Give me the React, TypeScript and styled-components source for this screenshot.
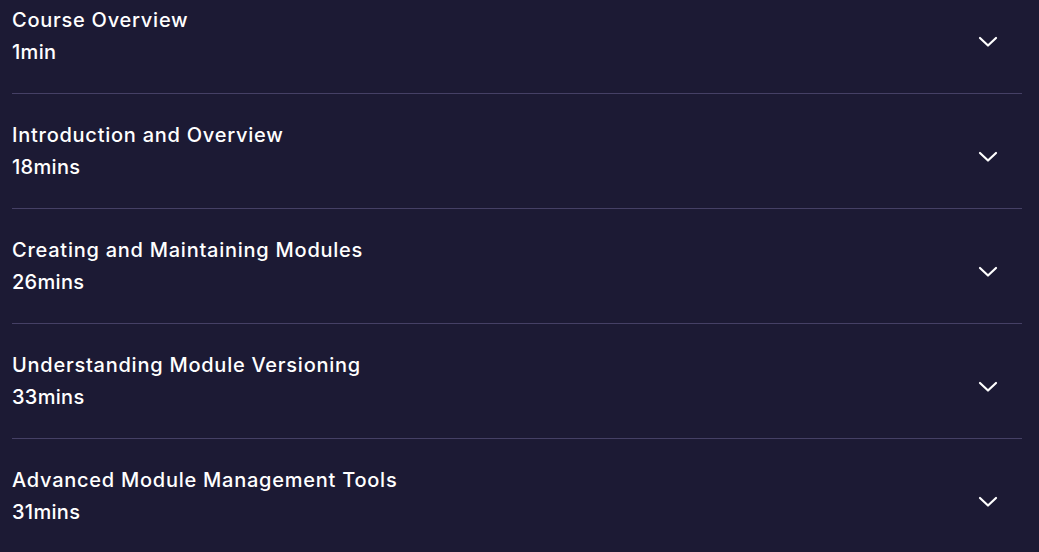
import styled, { createGlobalStyle } from 'styled-components';

const GlobalStyle = createGlobalStyle`
  html, body {
    margin: 0;
    padding: 0;
    background: #1c1a34;
  }
  body {
    font-family: Inter, "Liberation Sans", sans-serif;
    color: #ffffff;
    overflow: hidden;
  }
`;

const Page = styled.div`
  width: 1039px;
  height: 552px;
  overflow: hidden;
  padding: 0 17px 0 12px;
  box-sizing: border-box;
`;

// list is scrolled a little, first row starts above the viewport
const List = styled.ul`
  list-style: none;
  margin: -21px 0 0;
  padding: 0;
`;

const Row = styled.li`
  display: flex;
  align-items: center;
  justify-content: space-between;
  padding: 26px 0 24px;
  border-bottom: 1px solid #454065;
`;

const Texts = styled.div`
  display: flex;
  flex-direction: column;
`;

const Title = styled.span`
  font-size: 20px;
  font-weight: 500;
  line-height: 30px;
  letter-spacing: 0.75px;
`;

const Duration = styled.span`
  font-size: 20px;
  font-weight: 500;
  line-height: 34px;
  letter-spacing: 0.3px;
`;

const Toggle = styled.button`
  background: none;
  border: none;
  padding: 0;
  margin: 10px 24px 0 0;
  width: 20px;
  height: 12px;
  display: flex;
  align-items: center;
  justify-content: center;
  cursor: pointer;
`;

const Chevron = () => (
  <svg width="20" height="12" viewBox="0 0 20 12" fill="none">
    <path d="M2 2 L10 9.5 L18 2" stroke="#ffffff" strokeWidth="2.2" strokeLinecap="round" strokeLinejoin="round" />
  </svg>
);

const sections = [
  { title: 'Course Overview', duration: '1min' },
  { title: 'Introduction and Overview', duration: '18mins' },
  { title: 'Creating and Maintaining Modules', duration: '26mins' },
  { title: 'Understanding Module Versioning', duration: '33mins' },
  { title: 'Advanced Module Management Tools', duration: '31mins' },
];

export default function App() {
  return (
    <Page>
      <GlobalStyle />
      <List>
        {sections.map(s => (
          <Row key={s.title}>
            <Texts>
              <Title>{s.title}</Title>
              <Duration>{s.duration}</Duration>
            </Texts>
            <Toggle aria-label="Expand">
              <Chevron />
            </Toggle>
          </Row>
        ))}
      </List>
    </Page>
  );
}
